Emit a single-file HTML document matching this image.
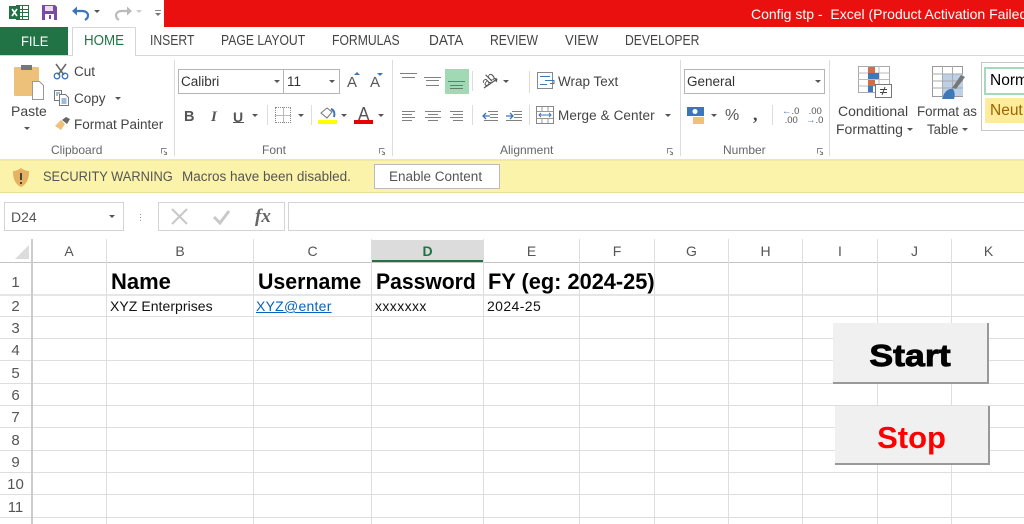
<!DOCTYPE html>
<html><head><meta charset="utf-8"><style>
html,body{margin:0;padding:0;background:#fff}
#p{position:relative;width:1024px;height:524px;overflow:hidden;background:#fff;font-family:"Liberation Sans",sans-serif;color:#444}
#p div,#p span.t{position:absolute;white-space:nowrap}
.t{line-height:1;transform-origin:0 0}
.r{font-size:13.5px}
.lb{font-size:12px;color:#666}
.tab{top:34px;font-size:14.5px;color:#444;transform:scaleX(.84)}
.car{position:absolute;width:0;height:0;border-left:3px solid transparent;border-right:3px solid transparent;border-top:3px solid #555}
.vs{width:1px;background:#dcdcdc}
.vl{width:1px;background:#dedede;top:239px;height:285px}
.hl{height:1px;background:#dedede;left:0;width:1024px}
.ch{font-size:14px;color:#555;top:244px;text-align:center}
.rn{font-size:15px;color:#555;left:0;width:31px;text-align:center}
.h{top:269px;font:bold 22px "Liberation Sans",sans-serif;color:#000}
.c{top:299px;font-size:14px;color:#111;letter-spacing:.25px}
svg{position:absolute;overflow:visible}
</style></head><body><div id="p">
<!-- title bar -->
<div style="left:164px;top:0;width:860px;height:27px;background:#ea1010"></div>
<span class="t" style="left:751px;top:7px;font-size:14px;color:#fff">Config stp -&nbsp; Excel (Product Activation Failed)</span>
<svg style="left:8px;top:4px" width="22" height="18"><rect x="8.500" y="1.500" width="12" height="14" fill="#fff" stroke="#217346"/><path d="M14.500 1v14M9 5.500h11M9 8.500h11M9 12.500h11" stroke="#217346"/><rect x="1" y="2" width="11" height="13" fill="#217346"/><path d="M4 5l5 7M9 5l-5 7" stroke="#fff" stroke-width="1.600"/></svg>
<svg style="left:41px;top:4px" width="17" height="17"><path d="M1 1h13l2 2v13H1z" fill="#7b4aa8"/><rect x="4" y="2" width="8" height="5" fill="#e8dcf2"/><rect x="4" y="10" width="9" height="6" fill="#fff"/><rect x="8" y="11" width="2" height="4" fill="#7b4aa8"/></svg>
<svg style="left:71px;top:4px" width="20" height="17"><path d="M3 7h8c4 0 6 2 6 4.500S15.500 15 14 16" fill="none" stroke="#3a76b8" stroke-width="2.200"/><path d="M1 7l5-4.500v9z" fill="#3a76b8"/></svg>
<div class="car" style="left:94px;top:10px"></div>
<svg style="left:113px;top:4px" width="20" height="17"><path d="M17 7H9c-4 0-6 2-6 4.500S4.500 15 6 16" fill="none" stroke="#bbb" stroke-width="2.200"/><path d="M19 7l-5-4.500v9z" fill="#bbb"/></svg>
<div class="car" style="left:136px;top:10px;border-top-color:#ccc"></div>
<div style="left:155px;top:10px;width:6px;height:1px;background:#888"></div>
<div class="car" style="left:155px;top:13px;border-top-color:#777"></div>
<!-- tabs -->
<div style="left:0;top:27px;width:68px;height:28px;background:#217346"></div>
<span class="t" style="left:21px;top:35px;font-size:13.500px;color:#fff;transform:scaleX(.96)">FILE</span>
<div style="left:0;top:55px;width:1024px;height:1px;background:#d6d6d6"></div>
<div style="left:72px;top:27px;width:64px;height:29px;background:#fff;border:1px solid #d6d6d6;border-bottom:0;box-sizing:border-box"></div>
<span class="t tab" style="left:84px;color:#217346;transform:scaleX(.92)">HOME</span>
<span class="t tab" style="left:150px">INSERT</span>
<span class="t tab" style="left:221px">PAGE LAYOUT</span>
<span class="t tab" style="left:332px">FORMULAS</span>
<span class="t tab" style="left:429px;transform:scaleX(.94)">DATA</span>
<span class="t tab" style="left:490px">REVIEW</span>
<span class="t tab" style="left:565px;transform:scaleX(.9)">VIEW</span>
<span class="t tab" style="left:625px">DEVELOPER</span>
<!-- clipboard -->
<svg style="left:13px;top:62px" width="34" height="40"><rect x="1" y="5" width="25" height="29" rx="1" fill="#edc17a"/><rect x="8" y="3" width="11" height="5" fill="#777"/><path d="M19.500 19.500h7l4 4v14h-11z" fill="#fff" stroke="#999"/></svg>
<span class="t r" style="left:11px;top:104px;font-size:14px">Paste</span>
<div class="car" style="left:24px;top:127px"></div>
<svg style="left:53px;top:63px" width="17" height="17"><path d="M3 1l8 11M13 1l-8 11" stroke="#666" stroke-width="1.500"/><circle cx="4" cy="13" r="2.800" fill="none" stroke="#3a76b8" stroke-width="1.300"/><circle cx="12" cy="13" r="2.800" fill="none" stroke="#3a76b8" stroke-width="1.300"/></svg>
<span class="t r" style="left:74px;top:65px">Cut</span>
<svg style="left:54px;top:90px" width="16" height="16"><path d="M.5.500h7v10h-7z" fill="#fff" stroke="#777"/><path d="M5.500 4.500h6l3 3v8h-9z" fill="#fff" stroke="#777"/><path d="M2 3h4M2 5h2M7.500 9h5M7.500 11h5M7.500 13h5" stroke="#3a76b8"/></svg>
<span class="t r" style="left:74px;top:92px">Copy</span>
<div class="car" style="left:115px;top:97px"></div>
<svg style="left:54px;top:116px" width="17" height="15"><path d="M1 10l6-6 4 4-4 6z" fill="#edc17a"/><path d="M8 4l4-3 4 2-3 5z" fill="#666"/></svg>
<span class="t r" style="left:74px;top:118px">Format Painter</span>
<span class="t lb" style="left:51px;top:144px">Clipboard</span>
<div class="vs" style="left:174px;top:60px;height:96px"></div>
<!-- font -->
<div style="left:178px;top:69px;width:106px;height:25px;border:1px solid #b5b5b5;box-sizing:border-box"></div>
<div style="left:283px;top:69px;width:57px;height:25px;border:1px solid #b5b5b5;box-sizing:border-box"></div>
<span class="t" style="left:181px;top:75px;font-size:13.500px;color:#333">Calibri</span>
<span class="t" style="left:287px;top:75px;font-size:13.500px;color:#333">11</span>
<div class="car" style="left:274px;top:80px"></div><div class="car" style="left:329px;top:80px"></div>
<span class="t" style="left:347px;top:75px;font-size:15px;color:#555">A</span>
<span class="t" style="left:370px;top:75px;font-size:15px;color:#555">A</span>
<div class="car" style="left:354px;top:72px;border-top:0;border-bottom:3px solid #3a76b8"></div>
<div class="car" style="left:377px;top:73px;border-top-color:#3a76b8"></div>
<span class="t" style="left:184px;top:109px;font:bold 14.500px 'Liberation Sans';color:#555">B</span>
<span class="t" style="left:211px;top:109px;font:italic bold 15px 'Liberation Serif';color:#555">I</span>
<span class="t" style="left:233px;top:109px;font:bold 14px 'Liberation Sans';color:#555">U</span>
<div style="left:233px;top:122px;width:11px;height:1px;background:#555"></div>
<div class="car" style="left:252px;top:114px"></div>
<div class="vs" style="left:267px;top:105px;height:20px"></div>
<div style="left:275px;top:107px;width:16px;height:16px;border:1px dotted #888;box-sizing:border-box"></div>
<div style="left:283px;top:107px;width:1px;height:16px;background:#bbb"></div><div style="left:275px;top:115px;width:16px;height:1px;background:#bbb"></div>
<div class="car" style="left:298px;top:114px"></div>
<div class="vs" style="left:311px;top:105px;height:20px"></div>
<svg style="left:319px;top:106px" width="18" height="14"><path d="M2 7l6-5 5 4-5 6z" fill="#fff" stroke="#777"/><path d="M12 3c3 1 4 4 3 8" stroke="#3a76b8" stroke-width="2" fill="none"/></svg>
<div style="left:318px;top:120px;width:19px;height:4px;background:#ffff00"></div>
<div class="car" style="left:341px;top:114px"></div>
<span class="t" style="left:358px;top:105px;font-size:18px;color:#555;transform:scaleX(.95)">A</span>
<div style="left:354px;top:120px;width:19px;height:4px;background:#e60000"></div>
<div class="car" style="left:378px;top:114px"></div>
<span class="t lb" style="left:262px;top:144px">Font</span>
<div class="vs" style="left:392px;top:60px;height:96px"></div>
<!-- alignment -->
<div style="left:445px;top:69px;width:24px;height:25px;background:#a2d9b5"></div>
<svg style="left:0;top:0" width="1024" height="130"><g fill="none" stroke="#808080" stroke-width="1.100"><path d="M400 73.500h17M402 77.500h13M424 77.500h17M426 80.500h13M426 85.500h13"/><path d="M448 81.500h17M450 85.500h13M450 88.500h13" stroke="#5f7f6c"/><path d="M402 111.500h13M402 114.500h10M402 117.500h13M402 120.500h10M425 111.500h16M428 114.500h10M425 117.500h16M428 120.500h10M450 111.500h13M453 114.500h10M450 117.500h13M453 120.500h10"/><path d="M488 111.500h10M490 114.500h8M490 117.500h8M484 120.500h14M512 111.500h10M514 114.500h8M514 117.500h8M506 120.500h16"/></g><path d="M483 116h7M486 113l-3 3 3 3M506 116h7M510 113l3 3-3 3" fill="none" stroke="#3a76b8" stroke-width="1.300"/><path d="M484 88l13-9M497 79l-3-.5M497 79l-1 3" fill="none" stroke="#555" stroke-width="1.200"/></svg>
<div class="vs" style="left:472px;top:71px;height:20px"></div>
<span class="t" style="left:479px;top:80px;font-size:12.500px;color:#555;transform:rotate(-45deg)">ab</span>
<div class="car" style="left:503px;top:80px"></div>
<div class="vs" style="left:529px;top:71px;height:22px"></div>
<svg style="left:537px;top:72px" width="20" height="18"><rect x=".5" y=".5" width="15" height="16" fill="#fff" stroke="#888"/><path d="M3 4.500h10M3 12.500h7M8 8.500h9v3h-4" stroke="#3a76b8" fill="none"/></svg>
<span class="t r" style="left:558px;top:75px">Wrap Text</span>
<div class="vs" style="left:472px;top:105px;height:20px"></div>
<div class="vs" style="left:529px;top:105px;height:20px"></div>
<svg style="left:536px;top:106px" width="20" height="18"><rect x=".5" y=".5" width="17" height="17" fill="#fff" stroke="#888"/><path d="M1 5.500h16M1 12.500h16M6 1v4M12 1v4M6 13v4M12 13v4" stroke="#999"/><path d="M3 9h12M5 7l-2 2 2 2M13 7l2 2-2 2" stroke="#3a76b8" fill="none"/></svg>
<span class="t r" style="left:558px;top:109px;letter-spacing:.1px">Merge &amp; Center</span>
<div class="car" style="left:665px;top:114px"></div>
<span class="t lb" style="left:500px;top:144px">Alignment</span>
<div class="vs" style="left:680px;top:60px;height:96px"></div>
<!-- number -->
<div style="left:684px;top:69px;width:141px;height:25px;border:1px solid #b5b5b5;box-sizing:border-box"></div>
<span class="t" style="left:687px;top:75px;font-size:13.500px;color:#333">General</span>
<div class="car" style="left:815px;top:80px"></div>
<svg style="left:687px;top:107px" width="20" height="18"><rect x="0" y="0" width="17" height="9" fill="#3a76b8"/><circle cx="8" cy="4.500" r="2.500" fill="#fff"/><rect x="6" y="10" width="11" height="7" fill="#edc17a"/></svg>
<div class="car" style="left:711px;top:114px"></div>
<span class="t" style="left:725px;top:108px;font-size:16px;color:#555">%</span>
<span class="t" style="left:753px;top:104px;font:bold 18px 'Liberation Serif';color:#444">,</span>
<div class="vs" style="left:772px;top:105px;height:20px"></div>
<span class="t" style="left:782px;top:108px;font-size:9.500px;line-height:8.500px;color:#555;white-space:pre"><span style="color:#3a76b8;font-weight:bold">←</span>.0
 .00</span>
<span class="t" style="left:806px;top:108px;font-size:9.500px;line-height:8.500px;color:#555;white-space:pre"> .00
<span style="color:#3a76b8;font-weight:bold">→</span>.0</span>
<span class="t lb" style="left:723px;top:144px">Number</span>
<div class="vs" style="left:829px;top:60px;height:96px"></div>
<!-- styles -->
<svg style="left:858px;top:66px" width="36" height="36"><rect x=".5" y=".5" width="31" height="26" fill="#fff" stroke="#aaa"/><path d="M.5 7h31M.5 13.500h31M.5 20h31M10.500 0v26M21 0v26" stroke="#bbb"/><rect x="10" y="1" width="7" height="6" fill="#d9694c"/><rect x="10" y="7" width="11" height="6" fill="#3f78b8"/><rect x="10" y="14" width="7" height="6" fill="#d9694c"/><rect x="10" y="20" width="5" height="6" fill="#3f78b8"/><rect x="17.500" y="18.500" width="16" height="13" fill="#fff" stroke="#777"/><path d="M22 23.500h7M22 26.500h7M27 21l-3 8" stroke="#444"/></svg>
<span class="t r" style="left:838px;top:104px;font-size:14px">Conditional</span>
<span class="t r" style="left:836px;top:122px;font-size:14px">Formatting</span>
<div class="car" style="left:907px;top:128px"></div>
<svg style="left:932px;top:66px" width="36" height="34"><rect x=".5" y=".5" width="30" height="30" fill="#fff" stroke="#999"/><rect x="11" y="8" width="20" height="22" fill="#bcd0e8"/><path d="M0 8h31M0 15h31M0 22h31M10.500 0v31M20.500 0v31" stroke="#aaa"/><path d="M20 22l9-13 4 2-9 12z" fill="#777"/><path d="M10 33c2-7 6-11 11-10 2 3 2 7 1 10z" fill="#3f78b8"/></svg>
<span class="t r" style="left:917px;top:104px;font-size:14px;transform:scaleX(.95)">Format as</span>
<span class="t r" style="left:927px;top:122px;font-size:14px;transform:scaleX(.94)">Table</span>
<div class="car" style="left:962px;top:128px"></div>
<div style="left:981px;top:62px;width:50px;height:69px;border:1px solid #c6c6c6;box-sizing:border-box"></div>
<div style="left:984px;top:67px;width:50px;height:28px;border:2px solid #a6d8ba;box-sizing:border-box;background:#fff"></div>
<span class="t" style="left:990px;top:73px;font-size:15.500px;color:#000">Norm</span>
<div style="left:985px;top:98px;width:45px;height:25px;background:#ffeb9c"></div>
<span class="t" style="left:990px;top:103px;font-size:15.500px;color:#9c6500">Neut</span>
<!-- launcher ticks -->
<svg style="left:0;top:0" width="1024" height="160"><g fill="none" stroke="#888"><path d="M161.500 153.500v-5h5M164 151l3 3M166.500 152v2.500h-2.500M379.500 153.500v-5h5M382 151l3 3M384.500 152v2.500h-2.500M667.500 153.500v-5h5M670 151l3 3M672.500 152v2.500h-2.500M817.500 153.500v-5h5M820 151l3 3M822.500 152v2.500h-2.500"/></g></svg>
<!-- warning -->
<div style="left:0;top:159px;width:1024px;height:34px;background:#fbf3a9;border-top:2px solid #f0e9a0;border-bottom:1px solid #e6df9a;box-sizing:border-box"></div>
<svg style="left:12px;top:167px" width="19" height="22"><path d="M9 1c3 2 5 3 8 3 0 8-2 13-8 16C3 17 1 12 1 4c3 0 5-1 8-3z" fill="#e4b262"/><path d="M9 6v7M9 15v2" stroke="#444" stroke-width="2"/></svg>
<span class="t" style="left:43px;top:170px;font-size:13.500px;color:#555;transform:scaleX(.95)">SECURITY WARNING</span>
<span class="t" style="left:182px;top:170px;font-size:13.500px;color:#555">Macros have been disabled.</span>
<div style="left:374px;top:164px;width:126px;height:25px;background:#fff;border:1px solid #bbb;box-sizing:border-box"></div>
<span class="t" style="left:389px;top:170px;font-size:13.500px;color:#555">Enable Content</span>
<!-- formula bar -->
<div style="left:4px;top:202px;width:120px;height:29px;border:1px solid #d4d4d4;box-sizing:border-box"></div>
<span class="t" style="left:11px;top:210px;font-size:14px;color:#555">D24</span>
<div class="car" style="left:109px;top:215px"></div>
<div style="left:140px;top:211px;width:1px;height:1px;box-shadow:0 3px #999,0 6px #999,0 9px #999"></div>
<div style="left:158px;top:202px;width:127px;height:29px;border:1px solid #d4d4d4;box-sizing:border-box"></div>
<svg style="left:171px;top:208px" width="60" height="18"><path d="M1 1l15 15M16 1L1 16" stroke="#c8c8c8" stroke-width="2"/><path d="M43 9l6 6 9-12" fill="none" stroke="#c8c8c8" stroke-width="3"/></svg>
<span class="t" style="left:255px;top:206px;font:italic bold 19px 'Liberation Serif';color:#666">fx</span>
<div style="left:288px;top:202px;width:740px;height:29px;border:1px solid #d4d4d4;box-sizing:border-box"></div>
<!-- grid -->
<svg style="left:14px;top:244px" width="16" height="16"><path d="M15 1v14H1z" fill="#dcdcdc"/></svg>
<div style="left:372px;top:240px;width:111px;height:22px;background:#dcdcdc"></div>
<div style="left:372px;top:260px;width:111px;height:2px;background:#217346"></div>
<div class="hl" style="top:262px;background:#c4c4c4"></div>
<div class="hl" style="top:294px;height:2px;background:#e6e6e6"></div>
<div class="hl" style="top:316px"></div><div class="hl" style="top:338px"></div>
<div class="hl" style="top:360px"></div><div class="hl" style="top:383px"></div>
<div class="hl" style="top:405px"></div><div class="hl" style="top:427px"></div>
<div class="hl" style="top:450px"></div><div class="hl" style="top:472px"></div>
<div class="hl" style="top:494px"></div><div class="hl" style="top:517px"></div>
<div class="vl" style="left:31px;width:2px;background:#ccc"></div>
<div class="vl" style="left:106px"></div><div class="vl" style="left:253px"></div>
<div class="vl" style="left:371px"></div><div class="vl" style="left:483px"></div>
<div class="vl" style="left:579px"></div><div class="vl" style="left:654px"></div>
<div class="vl" style="left:728px"></div><div class="vl" style="left:802px"></div>
<div class="vl" style="left:877px"></div><div class="vl" style="left:951px"></div>
<span class="t ch" style="left:32px;width:74px">A</span><span class="t ch" style="left:107px;width:146px">B</span>
<span class="t ch" style="left:254px;width:117px">C</span><span class="t ch" style="left:372px;width:111px;color:#217346;font-weight:bold">D</span>
<span class="t ch" style="left:484px;width:95px">E</span><span class="t ch" style="left:580px;width:74px">F</span>
<span class="t ch" style="left:655px;width:73px">G</span><span class="t ch" style="left:729px;width:73px">H</span>
<span class="t ch" style="left:803px;width:74px">I</span><span class="t ch" style="left:878px;width:73px">J</span>
<span class="t ch" style="left:952px;width:73px">K</span>
<span class="t rn" style="top:275px">1</span><span class="t rn" style="top:299px">2</span><span class="t rn" style="top:321px">3</span>
<span class="t rn" style="top:343px">4</span><span class="t rn" style="top:366px">5</span><span class="t rn" style="top:388px">6</span>
<span class="t rn" style="top:410px">7</span><span class="t rn" style="top:433px">8</span><span class="t rn" style="top:455px">9</span>
<span class="t rn" style="top:477px">10</span><span class="t rn" style="top:500px">11</span>
<span class="t h" style="left:111px">Name</span>
<span class="t h" style="left:258px;transform:scaleX(.97)">Username</span>
<span class="t h" style="left:376px;transform:scaleX(.96)">Password</span>
<span class="t h" style="left:488px;transform:scaleX(.99)">FY (eg: 2024-25)</span>
<span class="t c" style="left:110px;letter-spacing:.05px">XYZ Enterprises</span>
<span class="t c" style="left:256px;color:#0563c1;text-decoration:underline">XYZ@enter</span>
<span class="t c" style="left:375px;letter-spacing:.4px">xxxxxxx</span>
<span class="t c" style="left:487px;letter-spacing:.4px">2024-25</span>
<!-- buttons -->
<div style="left:833px;top:323px;width:156px;height:61px;background:#f0f0f0;border-right:2px solid #999;border-bottom:2px solid #999;box-sizing:border-box"></div>
<span class="t" style="left:833px;width:154px;top:338px;font:bold 31px 'Liberation Sans';color:#000;text-align:center;-webkit-text-stroke:.9px #000;transform-origin:50% 50%;transform:scaleX(1.15)">Start</span>
<div style="left:835px;top:406px;width:155px;height:59px;background:#f0f0f0;border-right:2px solid #999;border-bottom:2px solid #999;box-sizing:border-box"></div>
<span class="t" style="left:835px;width:153px;top:420px;font:bold 31px 'Liberation Sans';color:#f00;text-align:center">Stop</span>
</div></body></html>
